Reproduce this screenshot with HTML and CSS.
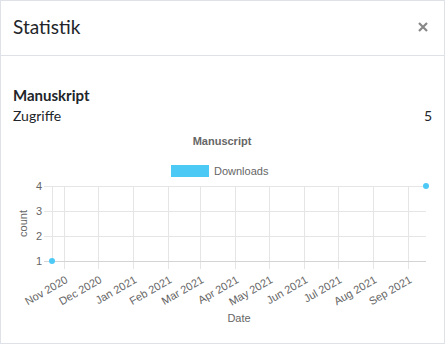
FILE: index.html
```html
<!DOCTYPE html>
<html lang="de">
<head>
<meta charset="utf-8">
<title>Statistik</title>
<link rel="stylesheet" href="styles.css">
</head>
<body>
<div class="modal">
  <div class="modal-header">
    <h5 class="modal-title">Statistik</h5>
    <button class="close" type="button" aria-label="Close">
      <svg class="close-icon" viewBox="0 0 10 10" width="10" height="10">
        <path d="M1 1 L9 9 M9 1 L1 9" />
      </svg>
    </button>
  </div>
  <div class="modal-body">
    <div class="stat-title">Manuskript</div>
    <div class="stat-row"><span>Zugriffe</span><span>5</span></div>
    <svg class="chart" width="418" height="205" viewBox="0 0 418 205">
      <g transform="translate(-13,-126)">
        <text class="chart-title" x="222" y="145" text-anchor="middle">Manuscript</text>
        <rect class="legend-box" x="171" y="165" width="38" height="12" />
        <text class="chart-text" x="214" y="175">Downloads</text>

        <g class="grid">
          <line x1="44" y1="186.5" x2="426" y2="186.5" />
          <line x1="44" y1="211.5" x2="426" y2="211.5" />
          <line x1="44" y1="236.5" x2="426" y2="236.5" />
          <line x1="52.5" y1="186" x2="52.5" y2="261" />
          <line x1="64.5" y1="186" x2="64.5" y2="269" />
          <line x1="98.5" y1="186" x2="98.5" y2="269" />
          <line x1="133.5" y1="186" x2="133.5" y2="269" />
          <line x1="168.5" y1="186" x2="168.5" y2="269" />
          <line x1="200.5" y1="186" x2="200.5" y2="269" />
          <line x1="235.5" y1="186" x2="235.5" y2="269" />
          <line x1="269.5" y1="186" x2="269.5" y2="269" />
          <line x1="304.5" y1="186" x2="304.5" y2="269" />
          <line x1="338.5" y1="186" x2="338.5" y2="269" />
          <line x1="373.5" y1="186" x2="373.5" y2="269" />
          <line x1="408.5" y1="186" x2="408.5" y2="269" />
        </g>
        <line class="axis" x1="44" y1="261.5" x2="426" y2="261.5" />

        <g class="chart-text" text-anchor="end">
          <text x="42" y="190">4</text>
          <text x="42" y="215">3</text>
          <text x="42" y="240">2</text>
          <text x="42" y="265">1</text>
        </g>
        <text class="chart-text" text-anchor="middle" transform="translate(26.5,223.5) rotate(-90)">count</text>

        <g class="chart-text" text-anchor="end">
          <text transform="translate(66.5,278.5) rotate(-30)" dy="4">Nov 2020</text>
          <text transform="translate(100.5,278.5) rotate(-30)" dy="4">Dec 2020</text>
          <text transform="translate(135.5,278.5) rotate(-30)" dy="4">Jan 2021</text>
          <text transform="translate(170.5,278.5) rotate(-30)" dy="4">Feb 2021</text>
          <text transform="translate(202.5,278.5) rotate(-30)" dy="4">Mar 2021</text>
          <text transform="translate(237.5,278.5) rotate(-30)" dy="4">Apr 2021</text>
          <text transform="translate(271.5,278.5) rotate(-30)" dy="4">May 2021</text>
          <text transform="translate(306.5,278.5) rotate(-30)" dy="4">Jun 2021</text>
          <text transform="translate(340.5,278.5) rotate(-30)" dy="4">Jul 2021</text>
          <text transform="translate(375.5,278.5) rotate(-30)" dy="4">Aug 2021</text>
          <text transform="translate(410.5,278.5) rotate(-30)" dy="4">Sep 2021</text>
        </g>

        <text class="chart-text" x="239" y="322" text-anchor="middle">Date</text>

        <circle class="point" cx="52" cy="261" r="3" />
        <circle class="point" cx="426" cy="186" r="3" />
      </g>
    </svg>
  </div>
</div>
</body>
</html>
```

FILE: styles.css
```css
* {
  box-sizing: border-box;
}

html, body {
  margin: 0;
  padding: 0;
  background: #ffffff;
}

body {
  font-family: Lato, "Open Sans", sans-serif;
  color: #212529;
}

.modal {
  width: 445px;
  height: 344px;
  border: 1px solid #dee2e6;
  overflow: hidden;
  background: #ffffff;
}

.modal-header {
  display: flex;
  align-items: flex-start;
  justify-content: space-between;
  height: 55px;
  padding: 14px 16px 0 12px;
  border-bottom: 1px solid #dee2e6;
}

.modal-title {
  margin: 0;
  font-size: 19px;
  font-weight: 400;
  line-height: 23px;
}

.close {
  display: flex;
  margin: 7px 0 0 0;
  padding: 0;
  border: 0;
  background: transparent;
  cursor: pointer;
}

.close-icon {
  display: block;
  fill: none;
  stroke: #888888;
  stroke-width: 2.2;
}

.modal-body {
  padding: 29px 12px 0 12px;
}

.stat-title {
  font-size: 15px;
  font-weight: 700;
  line-height: 21px;
}

.stat-row {
  display: flex;
  justify-content: space-between;
  font-size: 14px;
  line-height: 20px;
}

.chart {
  display: block;
  font-family: "Liberation Sans", Arial, sans-serif;
  font-size: 11px;
}

.chart-title {
  font-weight: 700;
  fill: #666666;
}

.chart-text {
  fill: #666666;
}

.legend-box {
  fill: #4dc9f6;
}

.grid line {
  stroke: #e5e5e5;
  stroke-width: 1;
}

.axis {
  stroke: #d4d4d4;
  stroke-width: 1;
}

.point {
  fill: #4dc9f6;
}
```
